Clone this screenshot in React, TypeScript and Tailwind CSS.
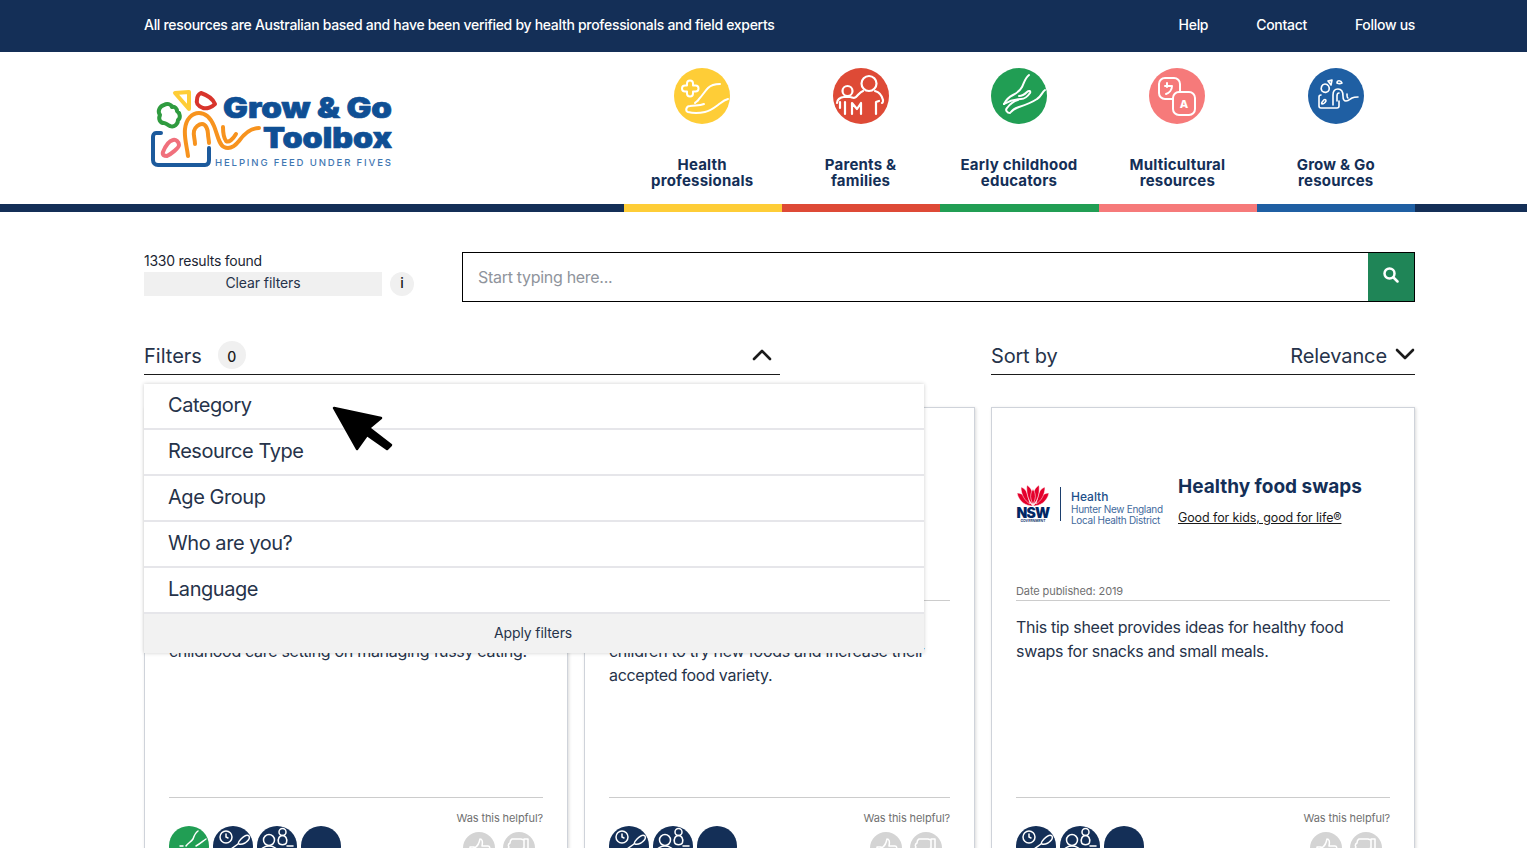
const font = { fontFamily: 'Inter, "Liberation Sans", sans-serif' };

const HealthIcon = () => (
  <svg viewBox="0 0 56 56" className="h-14 w-14" fill="none" stroke="#fff" strokeWidth="2" strokeLinecap="round" strokeLinejoin="round">
    <circle cx="28" cy="28" r="28" fill="#fecd37" stroke="none" />
    <path d="M13 15.500a3 3 0 0 1 6 0v2h2.500a3 3 0 0 1 0 6H19v2a3 3 0 0 1-6 0v-2h-2a3 3 0 0 1 0-6h2z" />
    <path d="M46 16c-6 0-9 1-12 4s-6 8-9 11c-1 2-3 3-4 4" />
    <path d="M54 31c-4 1-6 3-10 6-4 3-8 6-13 7-5 1-13 1-17 0-3-1-2-6 2-6 5-1 9 0 14-2" />
  </svg>
);

const ParentsIcon = () => (
  <svg viewBox="0 0 56 56" className="h-14 w-14" fill="none" stroke="#fff" strokeWidth="2.200" strokeLinecap="round" strokeLinejoin="round">
    <circle cx="28" cy="28" r="28" fill="#de4a36" stroke="none" />
    <circle cx="36" cy="15.500" r="7.500" />
    <circle cx="14.500" cy="23" r="5" />
    <path d="M4 35c0-3 3-6 7-6h6c2 0 4 2 6 0 3-3 4-5 7-6" />
    <path d="M42 23c4 1 7 5 8 9 0 2 0 3-1 3" />
    <path d="M7 34v6M12 34v12M19 46V35l5 6 4-6v11M43 46V34l3-1" />
  </svg>
);

const EducatorsIcon = () => (
  <svg viewBox="0 0 56 56" className="h-14 w-14" fill="none" stroke="#fff" strokeWidth="2" strokeLinecap="round" strokeLinejoin="round">
    <circle cx="28" cy="28" r="28" fill="#219e54" stroke="none" />
    <path d="M38 7c-4 3-5 8-7 12-2 4-5 6-9 8-4 2-7 5-9 9" />
    <path d="M54 22c-3 2-4 7-8 9-6 4-12 6-18 8-3 1-6 2-8 5" />
    <path d="M13 36c5-3 12-5 17-5 3 0 7-3 9-6 1-2-1-3-3-1-2 2-5 4-8 4" />
    <path d="M27 32c-4 1-8 4-11 8-2 2 0 5 3 5" />
  </svg>
);

const MultiIcon = () => (
  <svg viewBox="0 0 56 56" className="h-14 w-14" fill="none" stroke="#fff" strokeWidth="2" strokeLinecap="round" strokeLinejoin="round">
    <circle cx="28" cy="28" r="28" fill="#f67a7a" stroke="none" />
    <rect x="10" y="10" width="21" height="21" rx="6" />
    <rect x="24" y="24" width="22" height="23" rx="6" fill="#f67a7a" />
    <path d="M16 18h7c0 4-3 7-6 8M18 15v4" />
    <text x="35" y="40" textAnchor="middle" fontSize="11" fontWeight="800" fill="#fff" stroke="none" style={font}>A</text>
  </svg>
);

const GoIcon = () => (
  <svg viewBox="0 0 56 56" className="h-14 w-14" fill="none" stroke="#fff" strokeWidth="1.600" strokeLinecap="round" strokeLinejoin="round">
    <circle cx="28" cy="28" r="28" fill="#1f5fa3" stroke="none" />
    <path d="M17 16c3 0 5 3 4 6-1 3-5 3-7 1-2-3 0-7 3-7z" />
    <path d="M20 13l4-1-1 5zM29 15c0-3 4-3 5 0-2 1-3 1-5 0z" />
    <path d="M15 33c-1 1-2 2-1 3 2 0 3-1 4-3 0-2-2-2-3 0z" />
    <path d="M13 27c-1 0-2 1-2 2v9c0 1 1 2 2 2h16c1 0 2-1 2-2v-5" />
    <path d="M25 37V27c0-4 2-6 5-6 4 0 5 3 5 7 0 3 1 5 3 5 3 0 4-2 6-3 2-1 4-1 6-1" />
    <path d="M29 33v-5c0-2 1-3 2-3M39 26c0 2 0 4 1 4" />
  </svg>
);

const categories = [
  { label: ['Health', 'professionals'], Icon: HealthIcon, bar: 'bg-[#fecd37]' },
  { label: ['Parents &', 'families'], Icon: ParentsIcon, bar: 'bg-[#de4a36]' },
  { label: ['Early childhood', 'educators'], Icon: EducatorsIcon, bar: 'bg-[#219e54]' },
  { label: ['Multicultural', 'resources'], Icon: MultiIcon, bar: 'bg-[#f67a7a]' },
  { label: ['Grow & Go', 'resources'], Icon: GoIcon, bar: 'bg-[#1f5fa3]' },
];

const Logo = () => (
  <svg viewBox="0 0 250 84" className="h-[84px] w-[250px]" fill="none" strokeLinecap="round" strokeLinejoin="round">
    <path d="M31 6l14-1v17z" stroke="#fecd37" strokeWidth="4" />
    <path d="M57 6c6 2 12 6 14 11-3 3-8 5-12 4-5-2-7-5-6-8 0-3 2-6 4-7z" stroke="#d8352c" strokeWidth="4" />
    <path d="M20 18c3-2 7-1 8 2 3-1 5 2 5 4 3 2 4 7 1 9 0 4-4 8-8 6-3-1-4-3-6-3-4 0-6-4-4-8-3-4 0-9 4-10z" stroke="#2f9b3f" strokeWidth="4" />
    <path d="M19 65c2-5 6-11 10-12 3-1 6 2 6 5 0 3-8 9-12 11-3 0-5-1-4-4z" stroke="#f0707c" strokeWidth="4" />
    <path d="M44 69c-1-9-4-18-3-27 1-10 7-16 14-16 8 0 12 6 15 13 3 7 5 19 10 21 6 3 11-1 15-6 5-7 11-13 20-13" stroke="#f7931e" strokeWidth="4" />
    <path d="M51 57c0-5-2-9-1-13 1-4 5-7 8-7 4 0 6 6 6 10 0 3 1 6 1 9M79 40c0 6 1 11 3 14 3 2 7-2 10-7" stroke="#f7931e" strokeWidth="4" />
    <path d="M17 46h-5c-2 0-3 2-3 4v23c0 3 2 5 5 5h47c3 0 4-2 4-5V61" stroke="#1c5a9c" strokeWidth="4" />
    <text x="79" y="31" fontSize="28" fontWeight="900" fill="#0f4f94" stroke="#0f4f94" strokeWidth="0.700" style={font} textLength="169" lengthAdjust="spacingAndGlyphs">Grow &amp; Go</text>
    <text x="119" y="61" fontSize="28" fontWeight="900" fill="#0f4f94" stroke="#0f4f94" strokeWidth="0.700" style={font} textLength="129" lengthAdjust="spacingAndGlyphs">Toolbox</text>
    <text x="71" y="79" fontSize="9.600" fontWeight="500" fill="#3f77b2" style={font} textLength="176">HELPING FEED UNDER FIVES</text>
  </svg>
);

const NswLogo = () => (
  <div className="flex h-[36px] w-[147px] shrink-0 items-center">
    <div className="flex w-[34px] shrink-0 flex-col items-center">
      <svg viewBox="0 0 34 21" className="h-[21px] w-[34px]" fill="#e4002b" stroke="#fff" strokeWidth="0.500" strokeLinejoin="round">
        <path d="M1 8c3 0 6 1 8 4 2 3 5 6 8 9-7 0-14-4-16-13z" />
        <path d="M33 8c-3 0-6 1-8 4-2 3-5 6-8 9 7 0 14-4 16-13z" />
        <path d="M5 2c3 1 5 3 6 6l3 11C9 16 5 10 5 2z" />
        <path d="M29 2c-3 1-5 3-6 6l-3 11c5-3 9-9 9-17z" />
        <path d="M11 0c3 2 5 5 6 9l-1 10c-4-4-6-12-5-19z" />
        <path d="M23 0c-3 2-5 5-6 9l1 10c4-4 6-12 5-19z" />
        <path d="M17 4c2 3 3 7 2 10l-2 6-2-6c-1-3 0-7 2-10z" />
      </svg>
      <span className="text-[14px] leading-[13px] font-black tracking-[-0.7px] text-[#002664]">NSW</span>
      <span className="text-[3.500px] leading-[4px] font-semibold text-[#002664]">GOVERNMENT</span>
    </div>
    <div className="mx-[10px] h-[34px] w-px shrink-0 bg-[#1c3f6e]" />
    <div className="flex flex-col whitespace-nowrap pt-[6px] text-[#3f6a9d]">
      <span className="text-[12px] leading-[15px] font-medium text-[#1d4f8a]">Health</span>
      <span className="text-[10px] leading-[11px] tracking-[-0.3px]">Hunter New England</span>
      <span className="text-[10px] leading-[10px] tracking-[-0.3px]">Local Health District</span>
    </div>
  </div>
);

const Chevron = ({ up }: { up?: boolean }) => (
  <svg viewBox="0 0 20 12" className="h-3 w-5" fill="none" stroke="#1b1b1b" strokeWidth="2.600" strokeLinecap="round" strokeLinejoin="round">
    <path d={up ? 'M2 10l8-8 8 8' : 'M2 2l8 8 8-8'} />
  </svg>
);

const Thumb = ({ down }: { down?: boolean }) => (
  <div className="flex h-8 w-8 items-center justify-center rounded-full bg-[#d4d4d4]">
    <svg viewBox="0 0 32 32" className={down ? 'h-8 w-8 rotate-180' : 'h-8 w-8'} fill="none" stroke="#fff" strokeWidth="1.500" strokeLinecap="round" strokeLinejoin="round">
      <path d="M7 15h4v10H7zM11 16c3-1 5-4 6-9 2 0 3 2 2 7h6c2 0 2 2 1 3 1 1 1 3-1 4 0 2 0 3-2 4H14l-3-1" />
    </svg>
  </div>
);

const Badge = ({ kind }: { kind: 'green' | 'clock' | 'people' | 'blank' }) => (
  <svg viewBox="0 0 40 40" className="h-10 w-10 shrink-0" fill="none" stroke="#fff" strokeWidth="1.500" strokeLinecap="round" strokeLinejoin="round">
    <circle cx="20" cy="20" r="20" fill={kind === 'green' ? '#219e54' : '#142f57'} stroke="none" />
    {kind === 'green' && <path d="M29 5c-3 2-4 5-5 8-2 3-5 4-7 7M37 13c-3 2-6 5-10 7M14 20l-3 0" />}
    {kind === 'clock' && (
      <>
        <circle cx="13" cy="11" r="6" />
        <path d="M13 8v3l2 1" />
        <path d="M36 10c-2-2-5 0-8 3-2 2-3 3-3 5l-7 5M36 10c1 2-1 5-4 7-2 1-4 2-6 1" />
      </>
    )}
    {kind === 'people' && (
      <>
        <circle cx="12" cy="14" r="5.500" />
        <path d="M3 27c0-4 4-7 9-7s9 3 9 7" />
        <circle cx="25.500" cy="6" r="3.500" />
        <path d="M25.500 9.500c-3 0-5 3-4 7 1 3 7 3 8 0 1-4-1-7-4-7zM30 20h6" />
      </>
    )}
  </svg>
);

type CardProps = {
  green?: boolean;
  header?: boolean;
  lines: string[];
};

const Card = ({ green, header, lines }: CardProps) => (
  <div className="flex h-[460px] flex-col border border-[#cfd3da] px-6 pt-[62px] shadow-[1px_1px_3px_rgba(0,0,0,0.15)]">
    <div className="flex h-[115px] items-start gap-[15px]">
      {header && (
        <>
          <div className="pt-[16px]">
            <NswLogo />
          </div>
          <div className="flex flex-col">
            <h2 className="text-[19px] leading-[34px] font-bold text-[#142f57]">Healthy food swaps</h2>
            <a className="mt-[5px] text-[12.500px] leading-[18px] tracking-[-0.1px] text-[#1b1b1b] underline">Good for kids, good for life®</a>
          </div>
        </>
      )}
    </div>
    <div className="h-[16px] border-b border-[#cccccc] text-[11px] leading-[13px] tracking-[-0.1px] text-[#707070]">
      {header && 'Date published: 2019'}
    </div>
    <div className="mt-[14px] h-[183px] text-[16px] leading-[24px] tracking-[-0.3px] text-[#26334a]">
      {lines.map((line) => (
        <p key={line} className="min-h-6 whitespace-nowrap">{line}</p>
      ))}
    </div>
    <div className="flex justify-between border-t border-[#cccccc] pt-[13px]">
      <div className="flex gap-1 pt-[15px]">
        {green && <Badge kind="green" />}
        <Badge kind="clock" />
        <Badge kind="people" />
        <Badge kind="blank" />
      </div>
      <div className="flex flex-col items-end">
        <span className="text-[11px] leading-[15px] tracking-[-0.1px] text-[#707070]">Was this helpful?</span>
        <div className="mt-[6px] flex gap-2 pr-2">
          <Thumb />
          <Thumb down />
        </div>
      </div>
    </div>
  </div>
);

const App = () => {
  return (
    <div className="h-[848px] w-full overflow-hidden bg-white text-[#26334a]" style={font}>
      <div className="bg-[#142f57] pl-[144px]">
        <div className="flex h-[52px] w-[1271px] items-center justify-between pb-1 text-[14px] font-medium tracking-[-0.3px] text-white">
          <span>All resources are Australian based and have been verified by health professionals and field experts</span>
          <div className="flex gap-12">
            <span>Help</span>
            <span>Contact</span>
            <span>Follow us</span>
          </div>
        </div>
      </div>

      <header className="border-b-8 border-[#142f57] pl-[144px]">
        <div className="flex h-[152px] w-[1271px]">
          <div className="w-[480px] pt-[35px]">
            <Logo />
          </div>
          <nav className="-ml-px grid flex-1 grid-cols-5 pt-4">
            {categories.map(({ label, Icon }) => (
              <div key={label[0]} className="flex flex-col items-center">
                <Icon />
                <div className="mt-[33px] text-center text-[15px] leading-4 font-bold tracking-[0.2px] text-[#142f57]">
                  {label[0]}
                  <br />
                  {label[1]}
                </div>
              </div>
            ))}
          </nav>
        </div>
        <div className="-mb-2 flex h-2 w-[1271px] pl-[480px]">
          {categories.map(({ label, bar }) => (
            <div key={label[0]} className={`flex-1 ${bar}`} />
          ))}
        </div>
      </header>

      <main className="ml-[144px] w-[1271px] pt-10">
        <div className="flex gap-12">
          <div className="w-[270px]">
            <div className="text-[14px] leading-[18px] tracking-[-0.25px] text-[#1b2533]">1330 results found</div>
            <div className="mt-[2px] flex items-center gap-2">
              <button className="h-6 w-[238px] bg-[#f0f0f0] pb-[3px] text-[14px] tracking-[-0.1px] text-[#26334a]">Clear filters</button>
              <span className="flex h-6 w-6 items-center justify-center rounded-full bg-[#f0f0f0] pb-[3px] text-[14px] font-medium text-[#1b1b1b]">i</span>
            </div>
          </div>
          <div className="flex h-[50px] flex-1 border border-black">
            <div className="flex flex-1 items-center pb-[1px] pl-[15px] text-[16px] tracking-[-0.3px] text-[#8f949c]">Start typing here...</div>
            <div className="flex w-[46px] items-center justify-center bg-[#1f8557] pb-[4px]">
              <svg viewBox="0 0 16 16" className="h-4 w-4" fill="none" stroke="#fff" strokeWidth="2.500" strokeLinecap="round">
                <circle cx="6.500" cy="6.500" r="5" />
                <path d="M10.500 10.500l4 4" />
              </svg>
            </div>
          </div>
        </div>

        <div className="relative mt-10 flex justify-between">
          <div className="flex h-[33px] w-[636px] items-center justify-between border-b border-[#1b1b1b] pb-[6px]">
            <div className="flex items-center gap-4">
              <span className="pt-[2px] text-[20px] leading-7">Filters</span>
              <span className="flex h-7 w-7 items-center justify-center rounded-full bg-[#f0f0f0] pt-[2px] text-[14px] font-medium text-[#1b1b1b]">0</span>
            </div>
            <div className="pr-2">
              <Chevron up />
            </div>
          </div>
          <div className="flex h-[33px] w-[424px] items-center justify-between border-b border-[#1b1b1b] pb-[6px]">
            <span className="pt-[2px] text-[20px] leading-7 tracking-[-0.2px]">Sort by</span>
            <div className="flex items-center gap-2">
              <span className="pt-[2px] text-[20px] leading-7 tracking-[-0.1px]">Relevance</span>
              <div className="pb-[3px]">
                <Chevron />
              </div>
            </div>
          </div>

          <div className="absolute top-[42px] left-0 z-10 w-[780px] bg-white shadow-[0_0_4px_rgba(0,0,0,0.2)]">
            {['Category', 'Resource Type', 'Age Group', 'Who are you?', 'Language'].map((item) => (
              <div key={item} className="flex h-[46px] items-center border-b-2 border-[#e6e6ea] pb-[2px] pl-6 text-[20px] tracking-[-0.45px]">
                {item}
              </div>
            ))}
            <div className="flex h-[39px] items-center justify-center bg-[#f2f2f2] pb-[2px] pr-[2px] text-[14px] tracking-[-0.1px]">Apply filters</div>
            <svg viewBox="0 0 62 46" className="absolute top-[21px] left-[187px] h-[46px] w-[62px]" fill="#000" stroke="#000" strokeLinejoin="round" strokeLinecap="round">
              <path d="M3 3l47 10-12 10 22 17-4 4-20-14-10 14z" strokeWidth="2.500" />
            </svg>
          </div>
        </div>

        <div className="mt-[32px] grid grid-cols-[424px_391px_424px] gap-4">
          <Card green lines={['', 'childhood care setting on managing fussy eating.']} />
          <Card lines={['', 'children to try new foods and increase their', 'accepted food variety.']} />
          <Card header lines={['This tip sheet provides ideas for healthy food', 'swaps for snacks and small meals.']} />
        </div>
      </main>
    </div>
  );
};

export default App;
